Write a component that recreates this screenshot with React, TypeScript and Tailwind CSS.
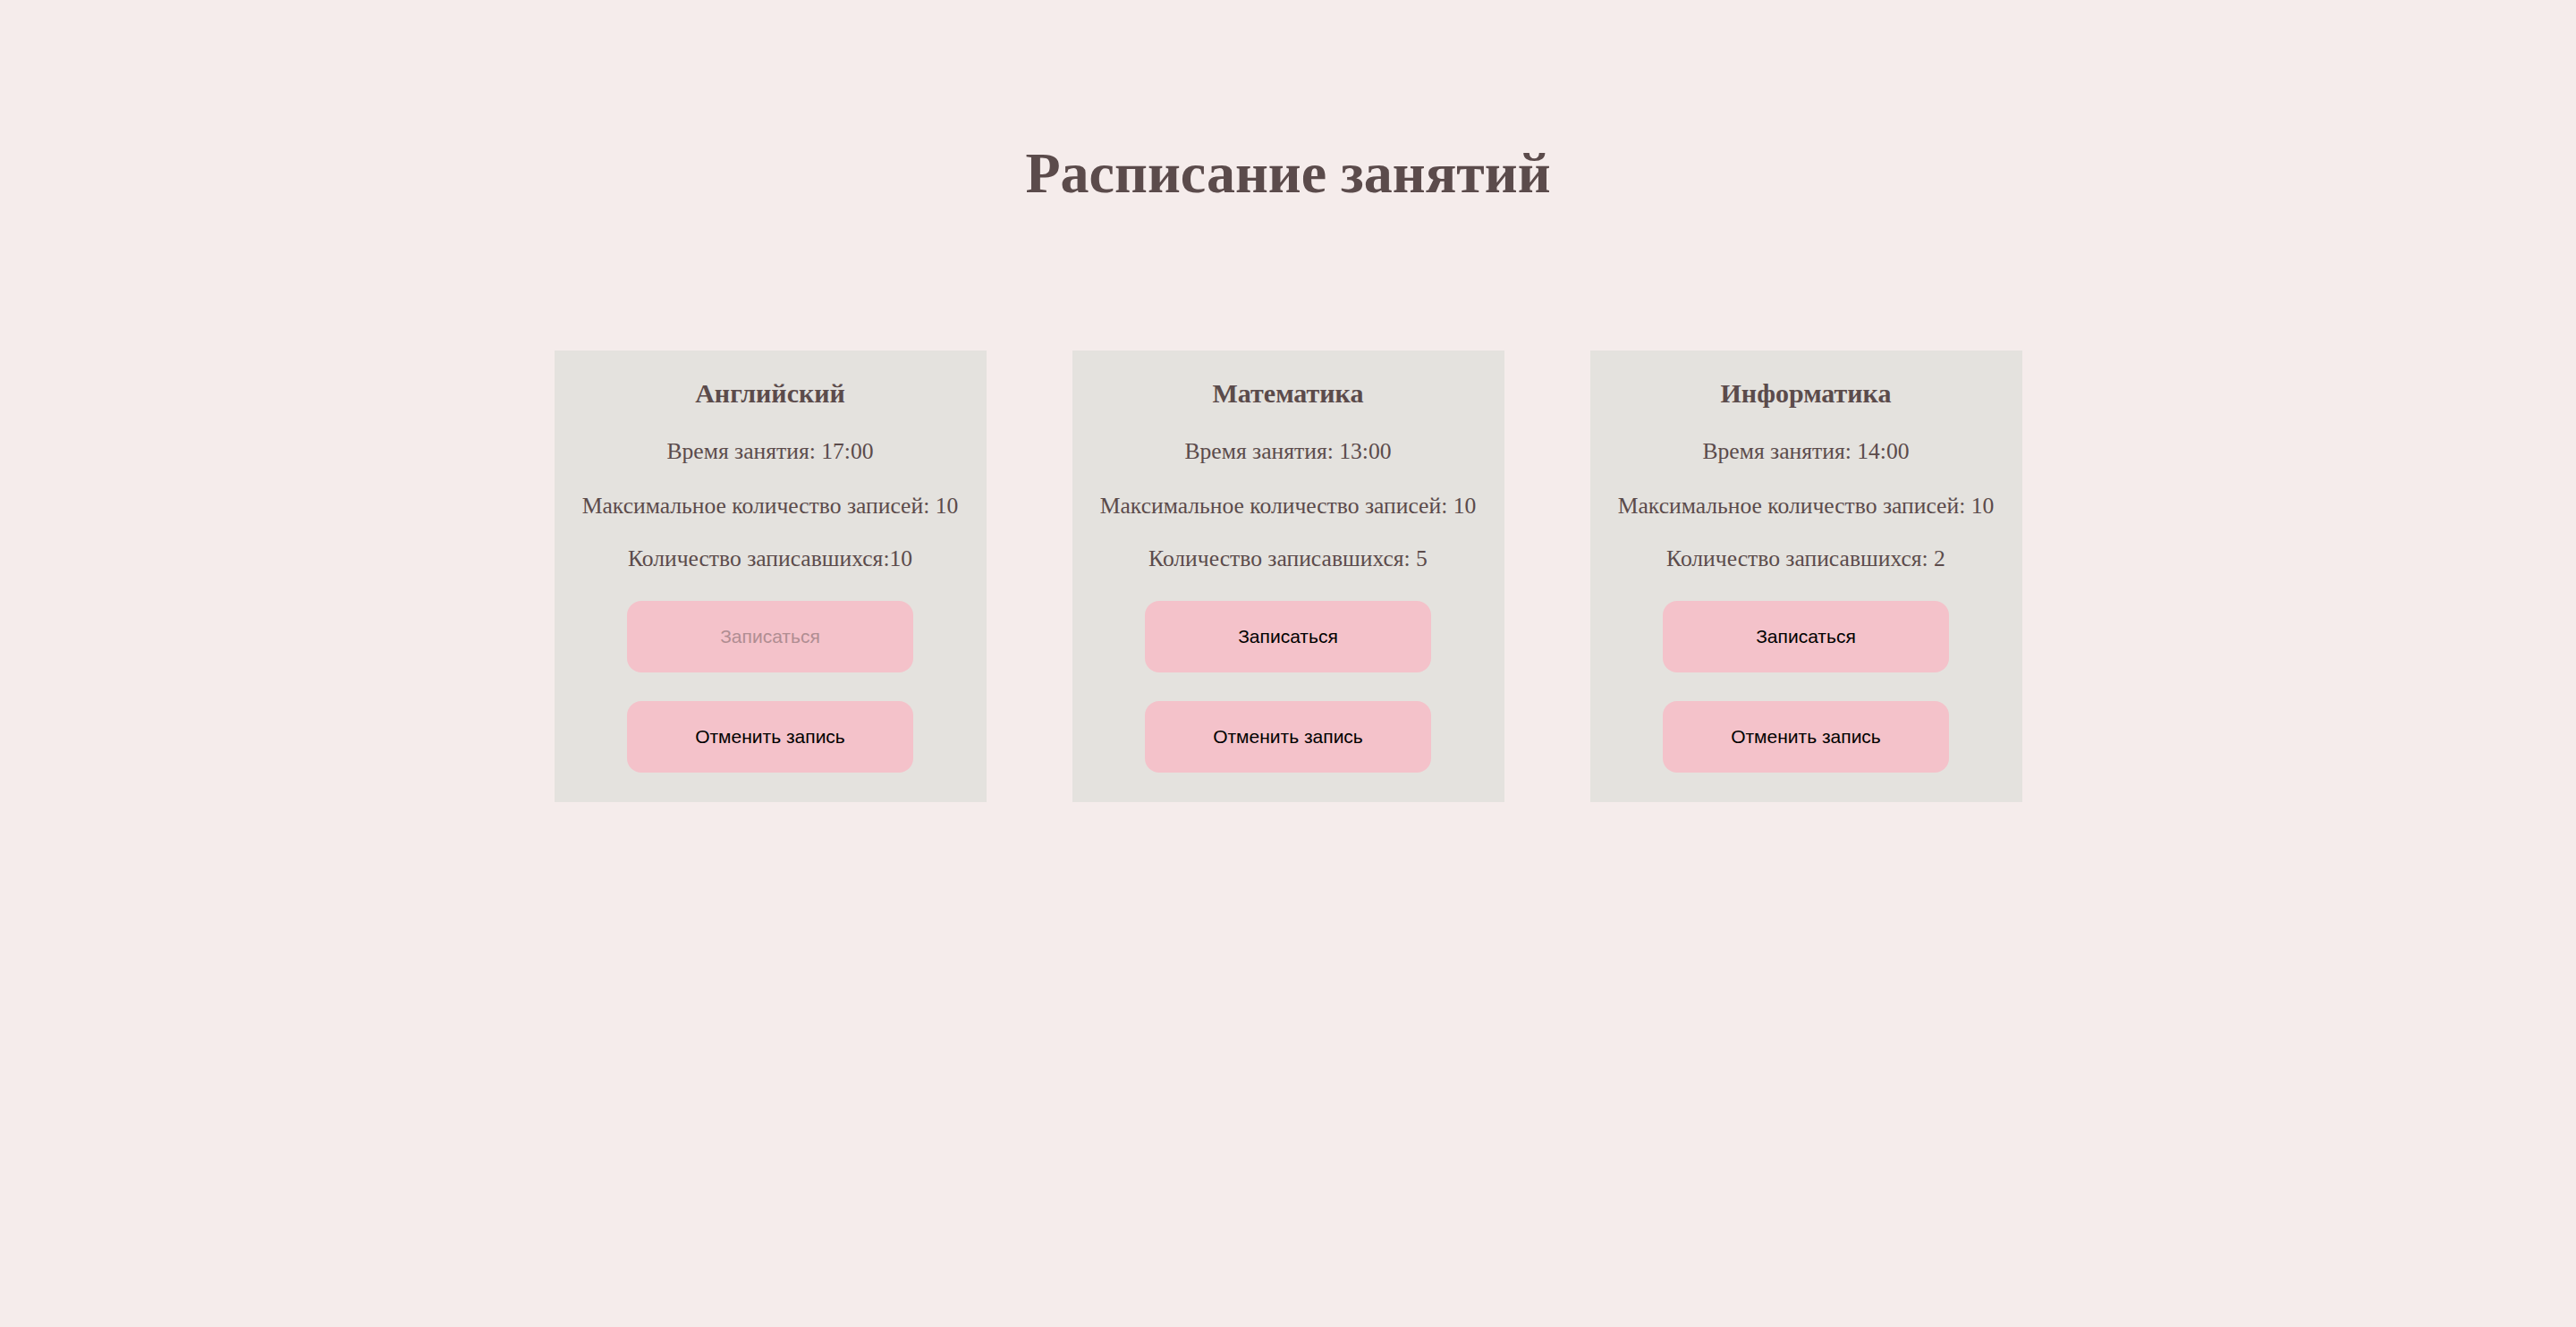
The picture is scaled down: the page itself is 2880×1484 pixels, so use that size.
import React from 'react';

const lessons = [
  { id: 1, name: 'Английский', time: '17:00', max: 10, enrolledLabel: 'Количество записавшихся:10', full: true },
  { id: 2, name: 'Математика', time: '13:00', max: 10, enrolledLabel: 'Количество записавшихся: 5', full: false },
  { id: 3, name: 'Информатика', time: '14:00', max: 10, enrolledLabel: 'Количество записавшихся: 2', full: false },
];

const App = () => {
  return (
    <div className="min-h-screen bg-[#f5eceb] text-[#5b4b4b] font-['Liberation_Serif',serif]">
      <h1 className="pt-[162px] text-center text-[64px] font-bold leading-none">Расписание занятий</h1>

      {/* Lessons */}
      <div className="mt-[166px] flex justify-center gap-[96px]">
        {lessons.map((lesson) => (
          <div key={lesson.id} className="w-[483px] bg-[#e4e2de] pt-[33px] pb-[33px] flex flex-col items-center">
            <h3 className="text-[30px] font-bold leading-none">{lesson.name}</h3>
            <p className="mt-[37px] text-[25.6px] leading-none">Время занятия: {lesson.time}</p>
            <p className="mt-[35px] text-[25.6px] leading-none">Максимальное количество записей: {lesson.max}</p>
            <p className="mt-[34px] text-[25.6px] leading-none">{lesson.enrolledLabel}</p>
            <button
              disabled={lesson.full}
              className="mt-[34px] w-[320px] h-[80px] rounded-[16px] bg-[#f4c2ca] font-['Liberation_Sans',Arial,sans-serif] text-[21px] text-black disabled:text-[#b08d92]"
            >
              Записаться
            </button>
            <button className="mt-[32px] w-[320px] h-[80px] rounded-[16px] bg-[#f4c2ca] font-['Liberation_Sans',Arial,sans-serif] text-[21px] text-black">
              Отменить запись
            </button>
          </div>
        ))}
      </div>
    </div>
  );
};

export default App;
